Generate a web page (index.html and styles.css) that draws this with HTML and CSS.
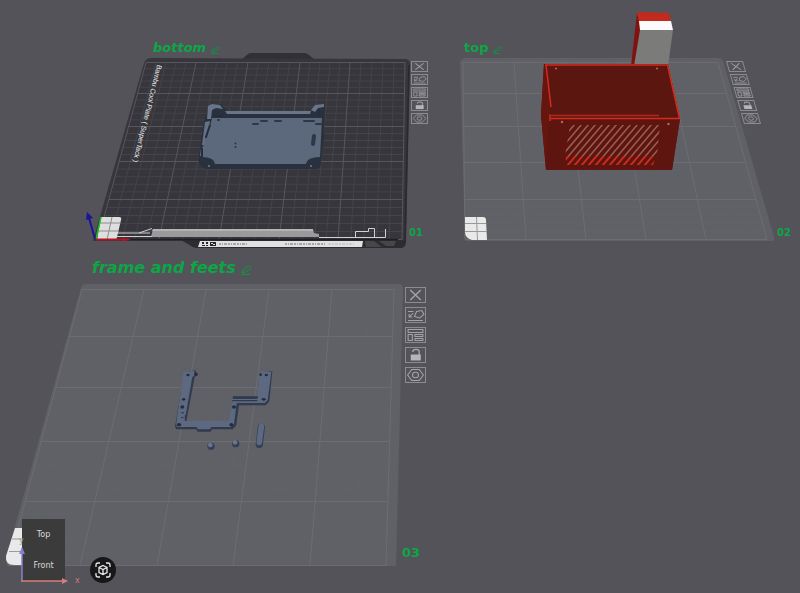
FILE: index.html
```html
<!DOCTYPE html>
<html lang="en">
<head>
<meta charset="utf-8">
<meta name="viewport" content="width=device-width, initial-scale=1">
<title>Build plates</title>
<link rel="stylesheet" href="styles.css">
</head>
<body>
<svg class="defs" aria-hidden="true">
  <symbol id="i-close" viewBox="1 1 18 14" preserveAspectRatio="none"><path d="M5 3 15 13M15 3 5 13" stroke-width="1.300"/></symbol>
  <symbol id="i-orient" viewBox="1 1 18 14" preserveAspectRatio="none"><path d="M3 13.500H17M3 4.500H8M4 10l4-4M4 7v3h3M11 4.500l5-1 2 4-4 3.500-5-1.500z"/></symbol>
  <symbol id="i-arrange" viewBox="1 1 18 14" preserveAspectRatio="none"><path d="M3 2.500H17V5.500H3zM3 7.500H7V13.500H3zM9.500 7.500H17V9.500H9.500zM9.500 11.500H17V13.500H9.500z"/></symbol>
  <symbol id="i-lock" viewBox="1 1 18 14" preserveAspectRatio="none"><path d="M7.500 5V4.500q0-2 2.500-2h1q2.500 0 2.500 2V8" stroke-width="1.300"/><rect class="solid" x="5.500" y="7.500" width="9.500" height="6"/></symbol>
  <symbol id="i-settings" viewBox="1 1 18 14" preserveAspectRatio="none"><path d="M6.500 2.500h7L17.500 8l-4 5.500h-7L2.500 8z"/><circle cx="10" cy="8" r="2.800"/></symbol>
  <symbol id="i-edit" viewBox="0 0 12 10" preserveAspectRatio="none"><path d="M2 7.500 3 5 8.500 1.200q1.500-.7 2.500.3t-.5 2L5 7.200zM1 9.300h9"/></symbol>
</svg>

<main class="stage">
  <svg class="scene" viewBox="0 0 800 593" aria-hidden="true">
    <!-- Plate 01 -->
    <path fill="#303035" d="M241 60 248 54Q249 53 252 53H304Q307 53 309 55L315 60z"/>
    <path fill="#37363c" d="M151 58 405 59Q410 59 410 64L406 243Q406 248 400 248H197Q193 248 190 245L182 241H93L144 63Q146 58 151 58z"/>
    <path fill="#2c2c31" d="M182 240H405L405 244Q404 248 400 248H197Q193 248 190 245z"/>
    <g id="grid-bottom"></g>
    <path fill="none" stroke="#29292e" stroke-width="1.500" d="M409 65 405 243"/>

    <!-- Tray model -->
    <path fill="#29313f" d="M208 107 212 104H221L227 111H312L316 105H325L324 138 321 164Q319 170 314 169H207Q199 167 198 160L203 127z"/>
    <path fill="#5c687c" d="M212 118H322L320 157Q307 157 306 164H215Q214 157 202 157L205 130 210 127z"/>
    <path fill="#68758a" d="M225 111H311L310 114H227zM208 106 212 104 220 105 223 109 216 108 212 110 211 119H207zM311 110 315 105 324 104V107L318 108 315 112z"/>
    <path fill="#657186" d="M205 122 210 121 209 127 206 134 204 145H202zM201 148 204 147 203 156H200z"/>
    <path stroke="#2d3747" stroke-width="2" stroke-linecap="round" fill="none" d="M253 124H258M261 121H267M275 121H281M304 121H314M316 124H321M218 120H219"/>
    <path stroke="#2d3747" stroke-width="4" stroke-linecap="round" d="M314 136 313 144"/>
    <path stroke="#262e3b" stroke-width="2" fill="none" d="M212 116H222M319 109V117M210 125 206 137 205 137M202 148V157"/>
    <g fill="#293342"><circle cx="235.500" cy="143.500" r="1"/><circle cx="235.500" cy="147" r="1"/></g>
    <g fill="#aab4c4"><circle cx="209" cy="166" r=".8"/><circle cx="311" cy="166" r=".8"/></g>

    <!-- Purge line and plate tag -->
    <path fill="#9a9a9c" d="M153 229H313L314 233 319 234V237H151z"/>
    <path fill="#b3b3b5" d="M153 229H313V231H152z"/>
    <path stroke="#d0d0d2" fill="none" d="M117 233H150M117 236.500H152M139 233 152 228.500M319 237.500H385.500V229M355.500 237V231.500H368.500V228.500H374.500V237"/>
    <path stroke="#202024" stroke-width="1.500" fill="none" d="M118 239.500H398"/>
    <path fill="#e0e0e1" d="M200 241H363L362 247H198z"/>
    <path fill="#26262a" d="M202 242h2v2h-2zM206 242h2v2h-2zM202 245h3v1h-3zM206 245h2v1h-2zM210 242h6v4h-6z"/>
    <path fill="#e0e0e1" d="M211 243h2v1h-2zM213 244h2v1h-2z"/>
    <path stroke="#a5a5aa" stroke-width="2" stroke-dasharray="2 1 1 1 3 1" d="M219 244H247M285 244H326"/>
    <path stroke="#b8b8bb" stroke-dasharray="3 1 2 1" d="M328 244H354"/>
    <path fill="#46464b" d="M365 241H374L382 247H366zM379 241H396L394 246H386z"/>
    <path fill="#dededf" d="M101 217H119Q122 217 121 220L117 237Q117 240 113 240H97z"/>
    <path stroke="#8c8c8f" fill="none" d="M99 223H120M98 231H119M112 217 107 240"/>
    <path stroke="#12c21c" stroke-width="1.500" d="M101 217 96 239"/>
    <path stroke="#b31620" stroke-width="2" d="M96 239.500H125"/><path fill="#b31620" d="M123 237.500 131 239.500 123 241.500z"/>
    <path stroke="#19159a" stroke-width="2" d="M95 239 89 218"/><path fill="#19159a" d="M87 212 93 218 86 220z"/>

    <!-- Plate 02 -->
    <path fill="#606166" d="M464 58H718Q722 58 723 61L774 237Q775 241 771 241H465L460 61z"/>
    <g id="grid-top"></g>
    <path fill="#e9e9e9" d="M465 217H483Q486 217 486 220L487 240H472Q465 238 465 232z"/>
    <path stroke="#99999b" fill="none" d="M465 223.500H486M465 231.500H487M476.500 217 477.500 240"/>

    <!-- Enclosure model -->
    <path fill="#80130f" d="M637 13 641 30 635 66H631z"/>
    <path fill="#c22a1d" d="M637 13 639 12 669 13 671 21H639z"/>
    <path fill="#fbfbfb" d="M639 21H671L673 30H640z"/>
    <path fill="#7b7b79" d="M640 30H673L668 66H634z"/>
    <path fill="#5b1610" d="M544 64H668L680 118 672 170H546L541 115z"/>
    <path fill="#66150f" d="M544 64 551 108 549 119 546 170 541 115z"/>
    <path fill="#5f150f" d="M549 119H680L672 170H546z"/>
    <path fill="none" stroke="#d42b1d" stroke-width="1.500" d="M545 65H667.500L679.500 118.500H551M546 65 551 107M550 121V114.500"/>
    <path fill="none" stroke="#b12a1e" stroke-width="1.500" d="M551 115.500H659"/>
    <clipPath id="vent-upper"><path d="M570 125H660L657 156H565z"/></clipPath>
    <clipPath id="vent-lower"><path d="M565 156H656L653 165H567z"/></clipPath>
    <g id="vents-upper" clip-path="url(#vent-upper)" stroke="#966056" stroke-width="1.500"></g>
    <g id="vents-lower" clip-path="url(#vent-lower)" stroke="#c82d20" stroke-width="2"></g>
    <g fill="#b8685c"><circle cx="556" cy="68.500" r="1"/><circle cx="657" cy="68.500" r="1"/><circle cx="562" cy="122" r="1.200"/><circle cx="668.500" cy="124" r="1.200"/></g>

    <!-- Plate 03 -->
    <path fill="#606166" d="M86 284H398Q403 284 403 289L396 566H12Q5 566 6 559L81 288Q82 284 86 284z"/>
    <g id="grid-frame"></g>
    <path fill="#e9e9e9" d="M15 528H34L26 565H14Q5 565 6 556z"/>
    <path stroke="#9b9b9e" fill="none" d="M12 539H30M9 551.500H28"/>

    <!-- Frame and feet models -->
    <g transform="translate(160 355) scale(.3333)">
      <path fill="#303b4e" d="M73 53 106 46 113 59 104 67 79 199H208L219 135V124H294L299 54 337 49 328 139 318 151H237L229 211 218 223H156L152 230H113L109 223H49L45 215z"/>
      <path fill="#5d6980" d="M71 50 103 48V62L97 66 74 198H206L217 143V132H292L298 50 334 51 323 136 314 144H230L222 207 212 216H154L150 223H114L110 216H51L48 209z"/>
      <path fill="none" stroke="#303a4c" stroke-width="4" d="M218 127H294M217 137H292"/>
      <g fill="#252d3d"><ellipse cx="84" cy="60" rx="5" ry="4"/><ellipse cx="108" cy="58" rx="5" ry="5"/><ellipse cx="71" cy="133" rx="5" ry="4"/><ellipse cx="67" cy="156" rx="6" ry="5"/><ellipse cx="57" cy="209" rx="7" ry="5"/><ellipse cx="214" cy="209" rx="6" ry="5"/><ellipse cx="222" cy="156" rx="6" ry="5"/><ellipse cx="311" cy="133" rx="6" ry="4"/><ellipse cx="319" cy="60" rx="5" ry="4"/><ellipse cx="302" cy="59" rx="4" ry="4"/></g>
      <path fill="none" stroke="#2b3446" stroke-width="3" d="M64 174q6-3 8 1M63 188q6-3 8 1M76 180v12"/>
      <path stroke="#344055" stroke-width="22" stroke-linecap="round" d="M304 217 298 268"/>
      <path stroke="#5d6980" stroke-width="17" stroke-linecap="round" d="M304 214 298 262"/>
      <g fill="#344055"><circle cx="153" cy="274" r="11"/><circle cx="227" cy="266" r="11"/></g>
      <g fill="#69758a"><circle cx="151" cy="270" r="7"/><circle cx="225" cy="262" r="7"/></g>
    </g>
  </svg>

  <p class="plate-print">Bambu Cool Plate ( SuperTack )</p>

  <h2 class="name name-bottom">bottom <button class="edit" aria-label="Rename bottom"><svg><use href="#i-edit"/></svg></button></h2>
  <h2 class="name name-top">top <button class="edit" aria-label="Rename top"><svg><use href="#i-edit"/></svg></button></h2>
  <h2 class="name name-frame">frame and feets <button class="edit" aria-label="Rename frame and feets"><svg><use href="#i-edit"/></svg></button></h2>

  <div class="tools tools-bottom">
    <button aria-label="Remove plate"><svg><use href="#i-close"/></svg></button>
    <button aria-label="Auto orient"><svg><use href="#i-orient"/></svg></button>
    <button aria-label="Arrange"><svg><use href="#i-arrange"/></svg></button>
    <button aria-label="Lock plate"><svg><use href="#i-lock"/></svg></button>
    <button aria-label="Plate settings"><svg><use href="#i-settings"/></svg></button>
  </div>
  <div class="tools tools-top">
    <button aria-label="Remove plate"><svg><use href="#i-close"/></svg></button>
    <button aria-label="Auto orient"><svg><use href="#i-orient"/></svg></button>
    <button aria-label="Arrange"><svg><use href="#i-arrange"/></svg></button>
    <button aria-label="Lock plate"><svg><use href="#i-lock"/></svg></button>
    <button aria-label="Plate settings"><svg><use href="#i-settings"/></svg></button>
  </div>
  <div class="tools tools-frame">
    <button aria-label="Remove plate"><svg><use href="#i-close"/></svg></button>
    <button aria-label="Auto orient"><svg><use href="#i-orient"/></svg></button>
    <button aria-label="Arrange"><svg><use href="#i-arrange"/></svg></button>
    <button aria-label="Lock plate"><svg><use href="#i-lock"/></svg></button>
    <button aria-label="Plate settings"><svg><use href="#i-settings"/></svg></button>
  </div>

  <span class="number number-bottom">01</span>
  <span class="number number-top">02</span>
  <span class="number number-frame">03</span>

  <div class="cube">
    <button>Top</button>
    <button>Front</button>
  </div>
  <svg class="axes" viewBox="0 0 84 52" aria-hidden="true">
    <path stroke="#8581cf" stroke-width="1.500" d="M6 44V16"/><path fill="#8581cf" d="M6 10 9 17H3z"/>
    <path stroke="#d37f7b" stroke-width="1.500" d="M5 44H48"/><path fill="#d37f7b" d="M46 41 52 44 46 47z"/>
  </svg>
  <span class="axis axis-x">x</span>
  <span class="axis axis-y">y</span>

  <button class="fit" aria-label="Fit view">
    <svg viewBox="0 0 26 26"><path d="M6 10V8q0-2 2-2h2M16 6h2q2 0 2 2v2M20 16v2q0 2-2 2h-2M10 20H8q-2 0-2-2v-2M13 8.500 17 10.500V15.500L13 17.500 9 15.500V10.500zM9 10.500 13 12.500 17 10.500M13 12.500V17.500"/></svg>
  </button>
</main>
<script src="script.js"></script>
</body>
</html>
```
FILE: styles.css
```css
* { box-sizing: border-box; }

body {
  margin: 0;
  background: #545359;
  font-family: "DejaVu Sans", sans-serif;
}

button {
  margin: 0;
  padding: 0;
  border: 0;
  background: none;
  color: inherit;
  font: inherit;
  cursor: pointer;
}

.defs { position: absolute; width: 0; height: 0; }

/* Canvas: items are placed by --x / --y in scene units. */
.stage {
  position: relative;
  width: 100%;
  aspect-ratio: 800 / 593;
  overflow: hidden;
}

.scene { display: block; width: 100%; }

.plate-print, .name, .tools, .number, .cube, .axes, .axis, .fit {
  position: absolute;
  left: calc(var(--x) / 800 * 100%);
  top: calc(var(--y) / 593 * 100%);
  margin: 0;
}

.major { stroke: #56565b; }
.minor { stroke: #434348; }
.light { stroke: #6c6d71; }
.faint { stroke: #626368; }

.plate-print {
  --x: 163;
  --y: 66;
  color: #f0f0f2;
  font: 400 7px/8px "Liberation Sans", sans-serif;
  white-space: nowrap;
  transform: rotate(104deg);
  transform-origin: 0 0;
}

.name {
  display: flex;
  align-items: center;
  gap: 4px;
  color: #0ca646;
  font-size: 13px;
  line-height: 16px;
  font-style: italic;
  white-space: nowrap;
}
.name-bottom { --x: 153; --y: 40; }
.name-top { --x: 464; --y: 40; font-style: normal; }
.name-frame { --x: 92; --y: 260; font-size: 16px; }

.edit { display: flex; padding-top: 4px; }
.edit svg { width: 10px; height: 8px; fill: none; stroke: #0b9b42; stroke-width: 1; }
.name-frame .edit svg { width: 12px; height: 10px; }

.tools { display: flex; flex-direction: column; gap: 2px; }
.tools button {
  display: flex;
  width: 17px;
  height: 11px;
  border: 1px solid #8c8c90;
}
.tools svg { width: 100%; height: 100%; fill: none; stroke: #a4a4a8; stroke-width: 1; }
.solid { fill: #b5b5b8; stroke: none; }
.tools-bottom { --x: 411; --y: 61; }
.tools-top { --x: 735; --y: 61; transform: skewX(16deg); }
.tools-frame { --x: 405; --y: 287; gap: 4px; }
.tools-frame button { width: 21px; height: 16px; }

.number { color: #0ca646; font-size: 10px; line-height: 12px; font-weight: 700; }
.number-bottom { --x: 409; --y: 227; }
.number-top { --x: 777; --y: 227; }
.number-frame { --x: 402; --y: 547; font-size: 13px; }

.cube {
  --x: 22;
  --y: 519;
  display: flex;
  flex-direction: column;
  width: 43px;
  height: 62px;
  background: #3b3b3b;
  color: #d8d8d8;
  font-size: 8px;
  line-height: 10px;
}
.cube button { flex: 1; }

.axes { --x: 16; --y: 537; width: 84px; height: 52px; pointer-events: none; }
.axis { font-size: 8px; line-height: 8px; }
.axis-x { --x: 75; --y: 577; color: #c97b78; }
.axis-y { --x: 19; --y: 537; color: #87a58d; }

.fit {
  --x: 90;
  --y: 557;
  width: 26px;
  height: 26px;
  border-radius: 50%;
  background: #171719;
}
.fit svg { display: block; fill: none; stroke: #e8e8e8; stroke-width: 1.300; }
```
FILE: script.js
```js
const NS = "http://www.w3.org/2000/svg";

function addPath(parent, className, d) {
  const path = document.createElementNS(NS, "path");
  if (className) path.setAttribute("class", className);
  path.setAttribute("fill", "none");
  path.setAttribute("d", d);
  parent.append(path);
}

// Splits each gap between stops into equal parts.
function subdivide(stops, parts) {
  const out = [];
  for (let i = 0; i < stops.length - 1; i++) {
    for (let k = 1; k < parts; k++) out.push(stops[i] + (stops[i + 1] - stops[i]) * k / parts);
  }
  return out;
}

function drawGrid(id, g) {
  const group = document.getElementById(id);
  const y0 = g.rows[0];
  const y1 = g.rows[g.rows.length - 1];
  const last = g.top.length - 1;
  const at = (a, b, y) => a + (b - a) * (y - y0) / (y1 - y0);
  const columns = (top, bottom) => top.map((x, i) => `M${x} ${y0}L${bottom[i]} ${y1}`).join("");
  const rows = (ys) => ys.map((y) =>
    `M${at(g.top[0], g.bottom[0], y)} ${y}H${at(g.top[last], g.bottom[last], y)}`).join("");

  addPath(group, g.minor, columns(subdivide(g.top, g.parts), subdivide(g.bottom, g.parts)) + rows(subdivide(g.rows, g.parts)));
  addPath(group, g.major, columns(g.top, g.bottom) + rows(g.rows));
}

drawGrid("grid-bottom", {
  top: [146, 196, 248, 300, 350, 405], bottom: [98, 159, 219, 279, 338, 402],
  rows: [62.5, 93.5, 126.5, 161.5, 199.5, 239.5], parts: 5, major: "major", minor: "minor"
});
drawGrid("grid-top", {
  top: [463, 514, 566, 617, 668, 718], bottom: [465, 526, 586, 646, 706, 767],
  rows: [62.5, 93.5, 126.5, 162.5, 199.5, 239.5], parts: 5, major: "light", minor: "faint"
});
drawGrid("grid-frame", {
  top: [82, 144, 206, 269, 332, 394], bottom: [8, 80, 157, 233, 310, 386],
  rows: [289.5, 336.5, 387.5, 441.5, 501.5, 565.5], parts: 5, major: "light", minor: "faint"
});

let slots = "";
for (let x = 532; x < 666; x += 7) slots += `M${x} 166L${x + 36} 124`;
addPath(document.getElementById("vents-upper"), "", slots);
addPath(document.getElementById("vents-lower"), "", slots);
```
